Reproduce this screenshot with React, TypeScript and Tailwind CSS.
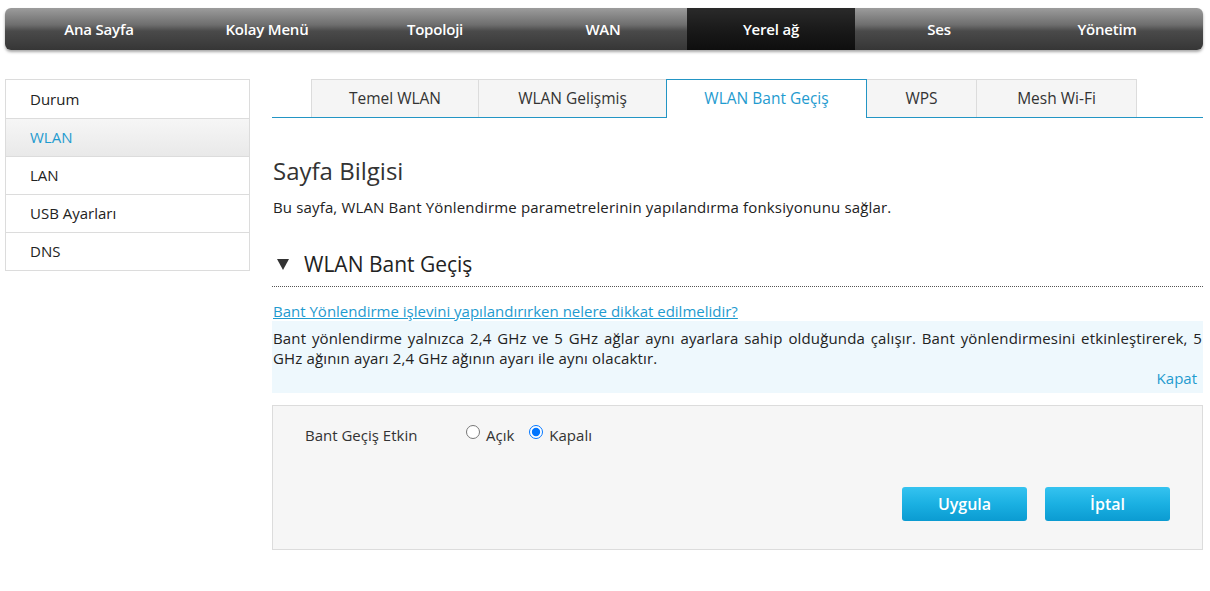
import React from "react";

const navItems = ["Ana Sayfa", "Kolay Menü", "Topoloji", "WAN", "Yerel ağ", "Ses", "Yönetim"];
const sideItems = ["Durum", "WLAN", "LAN", "USB Ayarları", "DNS"];
const tabs = [
  { label: "Temel WLAN", w: "w-[168px] border-l" },
  { label: "WLAN Gelişmiş", w: "w-[188px]" },
  { label: "WLAN Bant Geçiş", w: "w-[201px]" },
  { label: "WPS", w: "w-[110px]" },
  { label: "Mesh Wi-Fi", w: "w-[160px]" },
];

const btn =
  "w-[125px] h-[34px] rounded-[3px] text-white text-[16px] font-semibold bg-[linear-gradient(to_bottom,#35c3f0_0%,#1ab0e2_50%,#0b9bd1_100%)]";

export default function App() {
  return (
    <div className="w-[1210px] h-[591px] bg-white text-[#333] font-['Open_Sans',sans-serif] overflow-hidden">
      {/* top navigation */}
      <div className="pt-[8px] pl-[5px] pr-[7px]">
        <div className="h-[42px] rounded-[6px] flex pl-[10px] shadow-[0_2px_3px_rgba(0,0,0,0.35)] bg-[linear-gradient(to_bottom,#9c9c9c_0%,#6e6e6e_40%,#4a4a4a_55%,#363636_100%)] overflow-hidden">
          {navItems.map((n) => (
            <div
              key={n}
              className={
                "w-[168px] h-full flex items-center justify-center text-white text-[15px] font-semibold tracking-[-0.2px] " +
                (n === "Yerel ağ" ? "bg-[linear-gradient(to_bottom,#2a2a2a_0%,#1a1a1a_50%,#0e0e0e_100%)]" : "")
              }
            >
              {n}
            </div>
          ))}
        </div>
      </div>

      <div className="flex mt-[29px] pl-[5px] pr-[7px] gap-[22px]">
        {/* left menu */}
        <div className="w-[245px] shrink-0 border border-[#dcdcdc] self-start">
          {sideItems.map((s, i) => (
            <div
              key={s}
              className={
                "h-[38px] flex items-center pl-[24px] text-[15px] " +
                (i > 0 ? "border-t border-[#dcdcdc] " : "") +
                (s === "WLAN"
                  ? "text-[#1f9bcf] bg-[linear-gradient(to_bottom,#f6f6f6_0%,#e9e9e9_100%)]"
                  : "text-[#222] bg-white")
              }
            >
              {s}
            </div>
          ))}
        </div>

        {/* main content */}
        <div className="flex-1">
          <div className="flex border-b border-[#2395c4] pl-[39px] h-[39px]">
            {tabs.map((t) =>
              t.label === "WLAN Bant Geçiş" ? (
                <div
                  key={t.label}
                  className={t.w + " h-[39px] border border-b-0 border-[#2395c4] bg-white flex items-center justify-center text-[15.5px] text-[#1f9bcf] -ml-px -mb-[1px]"}
                >
                  {t.label}
                </div>
              ) : (
                <div
                  key={t.label}
                  className={t.w + " h-[38px] border-t border-r border-[#dcdcdc] bg-[#f5f5f5] flex items-center justify-center text-[15.5px] text-[#333]"}
                >
                  {t.label}
                </div>
              )
            )}
          </div>

          <div className="pl-[1px]">
            <h1 className="text-[24px] leading-none mt-[41px] text-[#333]">Sayfa Bilgisi</h1>
            <p className="text-[15px] tracking-[0.15px] mt-[13px] text-[#222]">
              Bu sayfa, WLAN Bant Yönlendirme parametrelerinin yapılandırma fonksiyonunu sağlar.
            </p>

            <div className="flex items-center mt-[32px] h-[28px]">
              <span className="w-[31px] pl-[4px] flex items-center">
                <svg width="12" height="11" viewBox="0 0 12 11">
                  <path d="M0 0 H12 L6 11 Z" fill="#333" />
                </svg>
              </span>
              <span className="text-[21px] text-[#222]">WLAN Bant Geçiş</span>
            </div>
          </div>
          <div className="mt-[7px] border-b border-dotted border-[#555]"></div>

          <div className="mt-[14px] pl-[1px] text-[15px] leading-[20px]">
            <a className="text-[#1f9bcf] underline">
              Bant Yönlendirme işlevini yapılandırırken nelere dikkat edilmelidir?
            </a>
          </div>
          <div className="bg-[#eef8fd] px-[1px] pt-[7px] pb-[5px]">
            <p className="text-[15px] tracking-[0.15px] leading-[20px] text-[#222] text-justify">
              Bant yönlendirme yalnızca 2,4 GHz ve 5 GHz ağlar aynı ayarlara sahip olduğunda çalışır. Bant yönlendirmesini etkinleştirerek, 5 GHz ağının ayarı 2,4 GHz ağının ayarı ile aynı olacaktır.
            </p>
            <div className="text-right text-[15px] text-[#1f9bcf] pr-[5px] leading-[20px]">Kapat</div>
          </div>

          <div className="mt-[12px] h-[145px] bg-[#f6f6f6] border border-[#dcdcdc] pt-[18px] pl-[32px] pr-[32px]">
            <div className="flex items-center text-[15px] text-[#333]">
              <span className="w-[161px]">Bant Geçiş Etkin</span>
              <label className="flex items-center gap-[6px] mr-[15px]">
                <input type="radio" name="bs" className="m-0 w-[14px] h-[14px] -mt-[5px]" />
                <span>Açık</span>
              </label>
              <label className="flex items-center gap-[6px]">
                <input type="radio" name="bs" defaultChecked className="m-0 w-[14px] h-[14px] -mt-[5px]" />
                <span>Kapalı</span>
              </label>
            </div>
            <div className="flex justify-end gap-[18px] mt-[41px]">
              <button className={btn}>Uygula</button>
              <button className={btn}>İptal</button>
            </div>
          </div>
        </div>
      </div>
    </div>
  );
}
